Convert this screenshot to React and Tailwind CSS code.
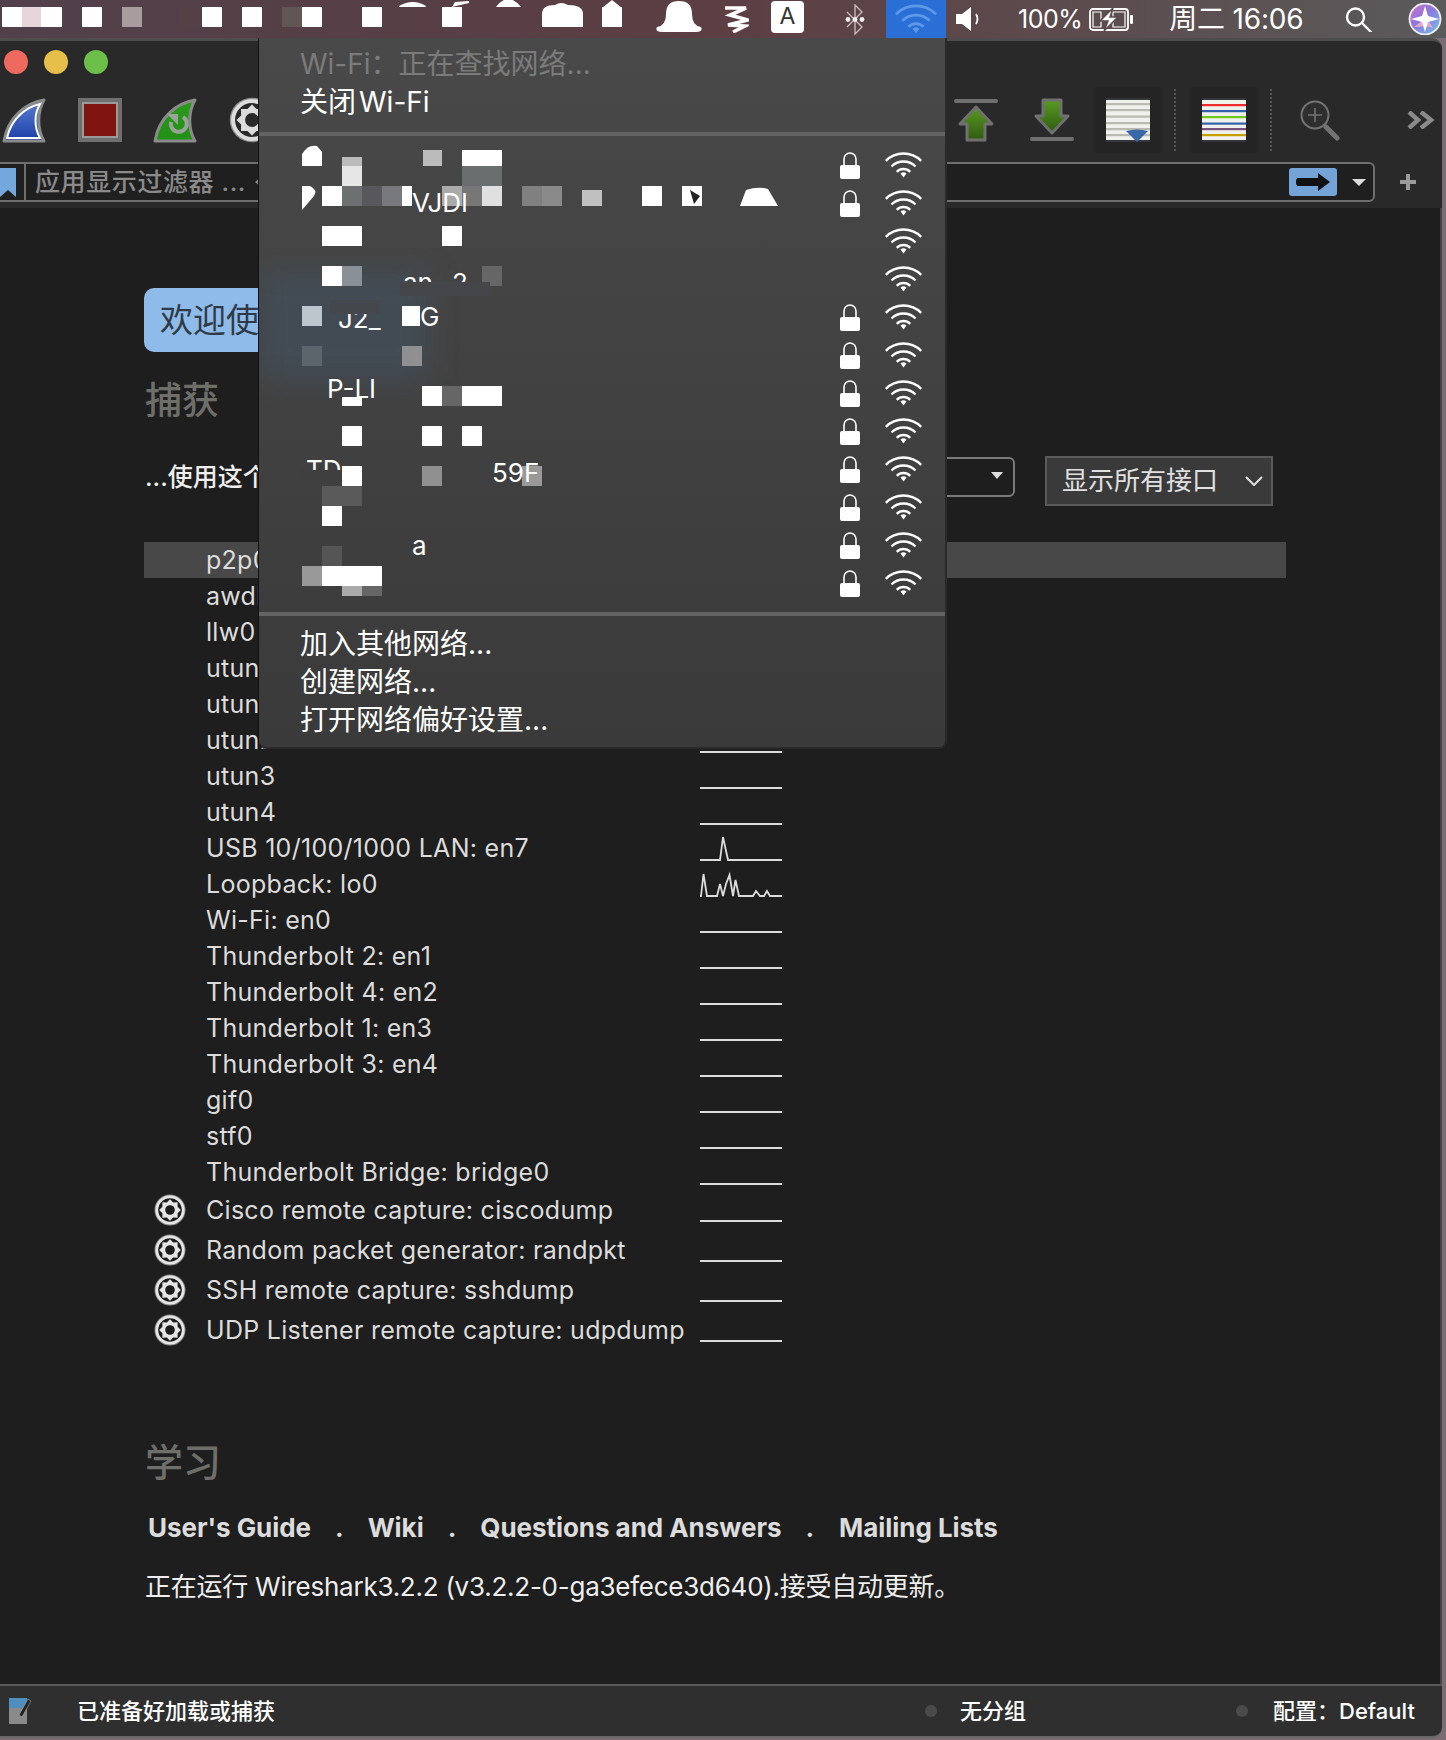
import React from 'react'

const INTERFACES = [
  { name: 'p2p0', active: true },
  { name: 'awdl0' },
  { name: 'llw0' },
  { name: 'utun0' },
  { name: 'utun1' },
  { name: 'utun2' },
  { name: 'utun3' },
  { name: 'utun4' },
  { name: 'USB 10/100/1000 LAN: en7', spark: '0,30 17,30 20,30 23,7 28,30 82,30' },
  { name: 'Loopback: lo0', spark: '0,30 1,30 3.5,8 7,30 17,30 20,18 23,30 26,18 29.5,9 33,30 35.5,14 39,30 53,30 56,25 60,30 64,30 67,25 70,30 82,30' },
  { name: 'Wi-Fi: en0' },
  { name: 'Thunderbolt 2: en1' },
  { name: 'Thunderbolt 4: en2' },
  { name: 'Thunderbolt 1: en3' },
  { name: 'Thunderbolt 3: en4' },
  { name: 'gif0' },
  { name: 'stf0' },
  { name: 'Thunderbolt Bridge: bridge0' },
]

const EXTCAP = [
  'Cisco remote capture: ciscodump',
  'Random packet generator: randpkt',
  'SSH remote capture: sshdump',
  'UDP Listener remote capture: udpdump',
]

// lock flag per wifi row, names are pixelated in the shot
const NETWORKS = [true, true, false, false, true, true, true, true, true, true, true, true]

// [x, y, w, h, fill] in page coordinates
const MENUBAR_BLOCKS = [
  [2, 7, 20, 20, '#fff'], [22, 7, 19, 20, '#e6d6dc'], [41, 7, 21, 20, '#fff'],
  [82, 7, 20, 20, '#fff'], [122, 7, 20, 20, '#a89c9f'], [182, 7, 20, 20, '#554046'],
  [202, 7, 20, 20, '#fff'], [242, 7, 20, 20, '#fff'], [282, 7, 20, 20, '#615654'],
  [302, 7, 20, 20, '#fff'], [362, 7, 20, 20, '#fff'], [442, 7, 20, 20, '#fff'],
  [602, 7, 20, 20, '#fff'],
]

const MOSAIC = [
  [342, 157, 20, 9, '#bbb'], [423, 150, 19, 16, '#bbb'], [462, 150, 40, 16, '#fff'],
  [342, 166, 20, 20, '#e6e6e6'], [462, 166, 40, 20, '#6a6e6e'],
  [322, 186, 20, 20, '#fff'], [342, 186, 20, 20, '#6d7070'], [362, 186, 20, 20, '#58585c'],
  [382, 186, 20, 20, '#78797c'], [402, 186, 10, 20, '#fff'], [442, 186, 20, 20, '#aaa'],
  [462, 186, 20, 20, '#777'], [482, 186, 20, 20, '#e0e0e0'], [522, 186, 20, 20, '#808080'],
  [542, 186, 20, 20, '#8a8a8a'], [582, 190, 20, 16, '#c0c0c0'], [642, 186, 20, 20, '#fff'],
  [682, 186, 20, 20, '#fff'],
  [322, 226, 40, 20, '#fff'], [442, 226, 20, 20, '#fff'],
  [322, 266, 20, 20, '#fff'], [342, 266, 20, 20, '#8a9098'], [482, 266, 20, 20, '#666'],
  [302, 306, 20, 20, '#bcc4cc'], [402, 306, 18, 20, '#fff'],
  [302, 346, 20, 20, '#5c646c'], [402, 346, 20, 20, '#909090'],
  [342, 397, 20, 9, '#fff'], [422, 386, 20, 20, '#fff'], [442, 386, 20, 20, '#666'], [462, 386, 40, 20, '#fff'],
  [342, 426, 20, 20, '#fff'], [422, 426, 20, 20, '#fff'], [462, 426, 20, 20, '#fff'],
  [342, 466, 20, 20, '#fff'], [422, 466, 20, 20, '#909090'], [522, 466, 20, 20, '#999'],
  [322, 486, 40, 20, '#5a5a5a'], [322, 506, 20, 20, '#fff'],
  [322, 546, 20, 20, '#555'],
  [302, 566, 20, 20, '#999'], [322, 566, 60, 20, '#fff'], [342, 586, 20, 10, '#aaa'], [362, 586, 20, 10, '#666'],
]

const MOSAIC_TEXT = [
  ['VJDI', 412, 212],
  ['an', 403, 292],
  ['2', 452, 292],
  ['J2_', 338, 328],
  ['G', 420, 326],
  ['P-LI', 327, 398],
  ['TD', 306, 479],
  ['59F', 492, 482],
  ['a', 412, 555],
]

// bits of menu colour that cut the letters off like the pixelation does
const MOSAIC_COVERS = [
  [400, 282, 90, 14, '#444649'],
  [330, 300, 50, 14, '#44484d'],
  [300, 470, 42, 12, '#3f3f3f'],
]

function arc(r, cx, cy, deg) {
  const a = (deg * Math.PI) / 180
  const dx = r * Math.sin(a)
  const dy = r * Math.cos(a)
  return `M${cx - dx} ${cy - dy}A${r} ${r} 0 0 1 ${cx + dx} ${cy - dy}`
}

function WifiIcon({ className, color = '#fff' }) {
  return (
    <svg viewBox="0 0 37 26" className={className} fill="none" stroke={color} strokeWidth="2.4">
      <path d={arc(25, 18.5, 26.5, 45)} />
      <path d={arc(17, 18.5, 26.5, 45)} />
      <path d={arc(9.5, 18.5, 26.5, 45)} />
      <path d="M15.5 21.5a4.5 4.5 0 0 1 6 0l-3 4z" fill={color} stroke="none" />
    </svg>
  )
}

function LockIcon({ className }) {
  return (
    <svg viewBox="0 0 20 27" className={className}>
      <path d="M4 14V7a6 6 0 0 1 12 0v7" fill="none" stroke="#fff" strokeWidth="1.6" />
      <rect x="0" y="13" width="20" height="14" rx="2" fill="#fff" />
    </svg>
  )
}

function Gear({ className, ring = '#e6e6e6', bg = '#1e1e1e' }) {
  const pts = []
  for (let i = 0; i < 16; i++) {
    const r = i % 2 === 0 ? 10.8 : 8.2
    const a = (i * Math.PI) / 8
    pts.push(`${16 + r * Math.cos(a)},${16 + r * Math.sin(a)}`)
  }
  return (
    <svg viewBox="0 0 32 32" className={className}>
      <circle cx="16" cy="16" r="15.5" fill="#8c8c8c" />
      <circle cx="16" cy="16" r="14.6" fill={ring} />
      <circle cx="16" cy="16" r="11.8" fill={bg} />
      <polygon points={pts.join(' ')} fill={ring} />
      <circle cx="16" cy="16" r="4.8" fill={bg} />
    </svg>
  )
}

function FinIcon({ className, id, top, bottom, inner }) {
  return (
    <svg viewBox="0 0 46 46" className={className}>
      <defs>
        <linearGradient id={id} x1="0" y1="0" x2="0" y2="1">
          <stop offset="0" stopColor={top} />
          <stop offset="1" stopColor={bottom} />
        </linearGradient>
      </defs>
      <path d="M43 3C25 6 7 20 3 44h40C36 32 36 15 43 3z" fill={`url(#${id})`} stroke="#8a8a8a" strokeWidth="3" strokeLinejoin="round" />
      {inner}
    </svg>
  )
}

function ToolArrow({ className, down, id }) {
  return (
    <svg viewBox="0 0 44 44" className={className}>
      <defs>
        <linearGradient id={id} x1="0" y1="0" x2="0" y2="1">
          <stop offset="0" stopColor={down ? '#2f5a10' : '#5a9a22'} />
          <stop offset="1" stopColor={down ? '#5a9a22' : '#2f5a10'} />
        </linearGradient>
      </defs>
      <g transform={down ? 'rotate(180 22 22)' : undefined}>
        <rect x="0" y="1" width="44" height="4" rx="2" fill="#6f6f6f" />
        <path d="M22 9L38 26H31V42H13V26H6z" fill={`url(#${id})`} stroke="#707070" strokeWidth="3" strokeLinejoin="round" />
      </g>
    </svg>
  )
}

function StripeDoc({ className, stripes, marker }) {
  return (
    <svg viewBox="0 0 44 44" className={className}>
      <rect width="44" height="44" fill="#f0f0ec" />
      <rect width="44" height="2" fill="#33373a" />
      <rect y="42" width="44" height="2" fill="#33373a" />
      {stripes.map(([y, c], i) => (
        <rect key={i} y={y} width="44" height="2.2" fill={c} />
      ))}
      {marker && <path d="M20 33Q31 30 42 33L31 44z" fill="#3a68a8" />}
    </svg>
  )
}

function Dotted() {
  return <div className="h-[62px] w-0 border-l-2 border-dotted border-[#555]" />
}

function MenuBar() {
  return (
    <div className="h-[38px] flex items-center bg-gradient-to-r from-[#51404a] via-[#5c3e43] to-[#5a5a5a] text-white">
      <svg viewBox="0 0 722 38" className="w-[722px] h-[38px] shrink-0">
        {MENUBAR_BLOCKS.map(([x, y, w, h, c], i) => (
          <rect key={i} x={x} y={y} width={w} height={h} fill={c} />
        ))}
        <path d="M542 27V14q0-9 13-9 6-4 13 0 15 0 15 9v13z" fill="#fff" />
        <path d="M399 6q14-8 27 0v1h-27zM452 7l3-5 14-1v2l-17 4zM496 7q12-16 25 0zM602 8l10-8 10 8z" fill="#fff" />
        <path d="M657 27q9-1 9-13 0-13 13-13t13 13q0 12 9 13 3 5-6 5h-32q-9 0-6-5z" fill="#fff" />
      </svg>
      <svg viewBox="0 0 26 28" className="w-[26px] h-[28px] ml-[1px] shrink-0" fill="none" stroke="#fff" strokeWidth="3.6">
        <path d="M2 3l21 0-16 7 18 5-20 5 17 1-12 6" />
      </svg>
      <div className="w-[33px] h-[32px] -mt-[5px] ml-[22px] bg-white rounded-[4px] flex items-center justify-center text-[#333] text-[23px] shrink-0">A</div>
      <svg viewBox="0 0 22 31" className="w-[22px] h-[31px] ml-[40px] shrink-0" fill="none" stroke="#c8b8bc" strokeWidth="1.4">
        <path d="M3 8l15 15-7 7V1l7 7L3 23" />
        <circle cx="4" cy="15.5" r="2.4" fill="#eee" stroke="none" />
        <circle cx="11" cy="15.5" r="2.4" fill="#eee" stroke="none" />
        <circle cx="18" cy="15.5" r="2.4" fill="#eee" stroke="none" />
      </svg>
      <div className="w-[60px] h-[38px] ml-[20px] bg-[#2a6fd6] flex items-center justify-center shrink-0">
        <WifiIcon className="w-[42px] h-[30px]" color="#5f9ae8" />
      </div>
      <svg viewBox="0 0 26 24" className="w-[26px] h-[24px] ml-[10px] shrink-0">
        <path d="M0 7h6l9-7v24l-9-7H0z" fill="#fff" />
        <path d="M20 7q3 5 0 10" fill="none" stroke="#fff" strokeWidth="1.8" />
      </svg>
      <span className="ml-[36px] text-[25px] leading-none tracking-[-0.5px] shrink-0">100%</span>
      <svg viewBox="0 0 44 23" className="w-[44px] h-[23px] ml-[7px] shrink-0">
        <rect x="1" y="1" width="38" height="21" rx="3" fill="none" stroke="#fff" strokeWidth="1.8" />
        <rect x="41" y="7" width="3" height="9" rx="1" fill="#fff" />
        <path d="M4 4h8v15H4zM24 4h12v15H24z" fill="none" stroke="#fff" strokeWidth="1.2" />
        <path d="M24 0L11 13h8l-4 10 14-14h-8z" fill="#fff" stroke="#5c4a4c" strokeWidth="1.5" />
      </svg>
      <span className="ml-[36px] text-[28px] leading-none tracking-[-0.2px] shrink-0">周二 16:06</span>
      <svg viewBox="0 0 28 25" className="w-[28px] h-[25px] ml-[42px] shrink-0" fill="none" stroke="#fff" strokeWidth="2.4">
        <circle cx="10.5" cy="10" r="8.5" />
        <path d="M17 16l9 9" strokeLinecap="round" />
      </svg>
      <svg viewBox="0 0 34 32" className="w-[34px] h-[32px] ml-[35px] shrink-0">
        <defs>
          <linearGradient id="siri" x1="0" y1="0" x2="1" y2="1">
            <stop offset="0" stopColor="#d86fc0" />
            <stop offset="0.45" stopColor="#8a78e0" />
            <stop offset="1" stopColor="#6fc8e8" />
          </linearGradient>
        </defs>
        <circle cx="17" cy="16" r="15.5" fill="url(#siri)" stroke="#eee" strokeWidth="1.8" />
        <path d="M6 24q8-6 11-8 5 3 8 9-7-2-8-2-6 1-11 1z" fill="#e8a8c8" />
        <path d="M17 3l3 10 11 3-11 3-3 10-3-10-11-3 11-3z" fill="#fff" />
      </svg>
    </div>
  )
}

function Toolbar() {
  return (
    <div className="bg-[#292929] border-t-[3px] border-[#4d4d4d] rounded-tr-[10px]">
      <div className="flex items-center gap-[16px] pl-[4px] pt-[9px] h-[33px]">
        <div className="w-6 h-6 rounded-full bg-[#ee6a5f]" />
        <div className="w-6 h-6 rounded-full bg-[#e5bf4a]" />
        <div className="w-6 h-6 rounded-full bg-[#6cc04a]" />
      </div>
      <div className="flex items-center h-[66px] mt-[13px]">
        <FinIcon
          id="finblue"
          top="#5a7fd2"
          bottom="#1c3ea8"
          className="w-[46px] h-[46px] ml-[1px]"
          inner={<path d="M39 7C25 10 10 22 6 41h33C33 30 33 17 39 7z" fill="none" stroke="#fff" strokeWidth="2" />}
        />
        <svg viewBox="0 0 44 44" className="w-[44px] h-[44px] ml-[31px]">
          <rect width="44" height="44" fill="#6f6f6f" />
          <rect x="4" y="4" width="36" height="36" fill="#9a9a9a" />
          <rect x="6" y="6" width="32" height="32" fill="#7f1410" />
        </svg>
        <FinIcon
          id="fingreen"
          top="#2a9a1c"
          bottom="#219015"
          className="w-[46px] h-[46px] ml-[30px]"
          inner={
            <g fill="none" stroke="#9aa39a" strokeWidth="4">
              <path d="M19 25a8 8 0 1 0 12-5" />
              <path d="M15 17h11v11z" fill="#9aa39a" stroke="none" />
            </g>
          }
        />
        <Gear className="w-[46px] h-[46px] ml-[31px]" ring="#dcdcdc" bg="#292929" />
        <ToolArrow id="arrowup" className="w-[44px] h-[44px] ml-[679px]" />
        <ToolArrow id="arrowdown" down className="w-[44px] h-[44px] ml-[32px]" />
        <div className="ml-[20px] w-[68px] h-[66px] bg-[#242424] rounded-[4px] flex items-center justify-center">
          <StripeDoc
            className="w-[44px] h-[44px]"
            marker
            stripes={[[5, '#b9bab2'], [11, '#b9bab2'], [17.5, '#b9bab2'], [24, '#b9bab2'], [30, '#b9bab2'], [36, '#b9bab2']]}
          />
        </div>
        <div className="ml-[12px]"><Dotted /></div>
        <div className="ml-[14px] w-[68px] h-[66px] bg-[#242424] rounded-[4px] flex items-center justify-center">
          <StripeDoc
            className="w-[44px] h-[44px]"
            stripes={[[6, '#ee2a2a'], [12, '#2f62a8'], [18, '#6fc81a'], [24.5, '#2f62a8'], [30, '#75507b'], [36, '#c4a000']]}
          />
        </div>
        <div className="ml-[12px]"><Dotted /></div>
        <svg viewBox="0 0 41 41" className="w-[41px] h-[41px] ml-[28px]" fill="none" stroke="#737373">
          <circle cx="15" cy="15" r="13.5" strokeWidth="2" fill="#2e2e2e" />
          <path d="M15 8v14M8 15h14" strokeWidth="1.6" />
          <path d="M26 27l11 11" strokeWidth="5" strokeLinecap="round" />
        </svg>
        <svg viewBox="0 0 28 18" className="w-[28px] h-[18px] ml-[66px]" fill="none" stroke="#8a8a8a" strokeWidth="4.5">
          <path d="M2 1l9 8-9 8" />
          <path d="M14 1l10 8-10 8" />
        </svg>
      </div>
      <div className="flex items-center mt-[9px] pb-[6px]">
        <div className="w-[1375px] h-[40px] bg-[#1f1f1f] border-y-2 border-r-2 border-[#6e6e6e] rounded-r-[6px] flex items-center">
          <svg viewBox="0 0 16 29" className="w-[16px] h-[29px]">
            <path d="M0 0h16v29l-8-7-8 7z" fill="#74a7dc" />
          </svg>
          <div className="w-[2px] h-full ml-[8px] bg-[#6e6e6e]" />
          <span className="ml-[9px] text-[25px] font-medium tracking-[0.6px] text-[#8a8a8a] leading-none">应用显示过滤器 ...</span>
          <div className="ml-[9px] w-0 h-0 border-y-[5px] border-y-transparent border-r-[6px] border-r-[#8a8a8a]" />
          <div className="ml-auto w-[48px] h-[28px] bg-[#74a3d8] rounded-[3px] flex items-center justify-center">
            <svg viewBox="0 0 34 18" className="w-[34px] h-[18px]">
              <path d="M2 5h20V0l12 9-12 9v-5H2q-2 0-2-4t2-4z" fill="#111" />
            </svg>
          </div>
          <div className="ml-[15px] mr-[7px] w-0 h-0 border-x-[7px] border-x-transparent border-t-[7px] border-t-[#ddd]" />
        </div>
        <svg viewBox="0 0 16 16" className="w-[16px] h-[16px] ml-[25px]">
          <path d="M6 0h4v6h6v4h-6v6H6v-6H0V6h6z" fill="#9a9a9a" />
        </svg>
      </div>
    </div>
  )
}

function InterfaceRow({ item, baseline = 30, height = 'h-[36px]', gear }) {
  return (
    <div className={`${height} flex items-center w-[1142px] ${item.active ? 'bg-[#484848]' : ''}`}>
      <div className="w-[62px] shrink-0 pl-[10px]">
        {gear && <Gear className="w-[32px] h-[32px]" />}
      </div>
      <div className="w-[494px] shrink-0 text-[#dcdcdc] text-[25px] leading-none tracking-[0.28px] whitespace-nowrap">{item.name}</div>
      <svg viewBox={`0 0 82 ${gear ? 40 : 36}`} className={`w-[82px] ${gear ? 'h-[40px]' : 'h-[36px]'} shrink-0`} fill="none" stroke="#dcdcdc" strokeWidth="1.8">
        <polyline points={item.spark || `0,${baseline} 82,${baseline}`} />
      </svg>
    </div>
  )
}

function MainContent() {
  return (
    <div className="flex-1 bg-[#1e1e1e] pl-[144px] pt-[80px] border-r-2 border-[#444]">
      <div className="w-[400px] h-[64px] rounded-[10px] bg-[#8ebbe9] flex items-center pl-[16px] text-[33px] text-[#2f3a46] leading-none">欢迎使</div>
      <div className="mt-[29px] ml-[1px] h-[38px] flex items-center text-[37px] font-medium text-[#6f6f6a] leading-none">捕获</div>
      <div className="mt-[37px] h-[50px] flex items-center">
        <div className="w-[401px] shrink-0 ml-[1px] -mt-[7px] text-[25px] text-[#eee] font-medium leading-none whitespace-nowrap">...使用这个</div>
        <div className="w-[469px] h-[40px] -mt-[8px] border-2 border-[#7a7a7a] rounded-[6px] flex items-center justify-end pr-[10px]">
          <div className="w-0 h-0 border-x-[6px] border-x-transparent border-t-[7px] border-t-[#ddd] -mt-[3px]" />
        </div>
        <div className="ml-[30px] w-[228px] h-[50px] bg-[#3a3a3a] border-2 border-[#5a5a5a] flex items-center pl-[15px] text-[26px] text-[#e0e0e0] leading-none -mt-[1px]">
          显示所有接口
          <svg viewBox="0 0 18 10" className="w-[18px] h-[10px] ml-[27px]" fill="none" stroke="#e0e0e0" strokeWidth="2">
            <path d="M1 1l8 8 8-8" />
          </svg>
        </div>
      </div>
      <div className="mt-[36px]">
        {INTERFACES.map((item) => (
          <InterfaceRow key={item.name} item={item} />
        ))}
        {EXTCAP.map((name) => (
          <InterfaceRow key={name} item={{ name }} gear baseline={31} height="h-[40px]" />
        ))}
      </div>
      <div className="mt-[92px] ml-[1px] h-[40px] flex items-center text-[38px] font-medium text-[#6f6f6a] leading-none">学习</div>
      <div className="mt-[29px] ml-[4px] h-[34px] flex items-center text-[26px] font-bold tracking-[-0.05px] text-[#dcdcdc] leading-none whitespace-nowrap">
        <span>User's Guide</span>
        <span className="ml-[24px]">.</span>
        <span className="ml-[24px]">Wiki</span>
        <span className="ml-[24px]">.</span>
        <span className="ml-[24px]">Questions and Answers</span>
        <span className="ml-[24px]">.</span>
        <span className="ml-[25px]">Mailing Lists</span>
      </div>
      <div className="mt-[26px] ml-[1px] h-[32px] flex items-center text-[26px] text-[#eee] tracking-[-0.25px] leading-none whitespace-nowrap">
        正在运行 Wireshark3.2.2 (v3.2.2-0-ga3efece3d640).接受自动更新。
      </div>
    </div>
  )
}

function StatusBar() {
  return (
    <div className="h-[54px] bg-[#2f2f2f] border-t-2 border-[#5a5a5a] border-b-2 border-b-[#666] rounded-br-[10px] flex items-center text-white text-[22px] font-medium leading-none whitespace-nowrap">
      <svg viewBox="0 0 23 26" className="w-[23px] h-[26px] ml-[9px] shrink-0">
        <rect y="0" width="18" height="10" fill="#4f8fc0" />
        <rect y="10" width="18" height="16" fill="#8a8a8a" />
        <path d="M19 1l3 2-9 16-3-2z" fill="#222" stroke="#aaa" strokeWidth="0.6" />
      </svg>
      <span className="ml-[45px]">已准备好加载或捕获</span>
      <div className="w-3 h-3 rounded-full bg-[#4a4a4a] ml-[650px]" />
      <span className="ml-[23px]">无分组</span>
      <div className="w-3 h-3 rounded-full bg-[#4a4a4a] ml-[210px]" />
      <span className="ml-[25px]">配置：Default</span>
    </div>
  )
}

function WifiMenu() {
  return (
    <div className="absolute left-[259px] top-[38px] w-[688px] h-[711px] bg-gradient-to-b from-[#494949] to-[#3b3a3a] border-r-2 border-b-2 border-[#2a2a2a] rounded-b-[8px] shadow-[-1px_0_0_#111] text-[28px] leading-none text-white overflow-hidden">
      <div className="h-[38px] mt-[7px] pl-[41px] flex items-center text-[#7b7b7b]">Wi-Fi：正在查找网络...</div>
      <div className="h-[38px] pl-[41px] flex items-center">关闭<span className="ml-[3px]">Wi-Fi</span></div>
      <div className="h-[4px] mt-[11px] bg-[#636363]" />
      <div className="mt-[10px]">
        {NETWORKS.map((locked, i) => (
          <div key={i} className="h-[38px] flex items-center justify-end pr-[23px] gap-[25px]">
            <LockIcon className={`w-[20px] h-[27px] ${locked ? '' : 'invisible'}`} />
            <WifiIcon className="w-[37px] h-[26px]" />
          </div>
        ))}
      </div>
      <div className="h-[4px] mt-[10px] bg-[#636363]" />
      <div className="mt-[9px]">
        <div className="h-[38px] pl-[41px] flex items-center">加入其他网络...</div>
        <div className="h-[38px] pl-[41px] flex items-center">创建网络...</div>
        <div className="h-[38px] pl-[41px] flex items-center">打开网络偏好设置...</div>
      </div>
      {/* pixelated network names */}
      <svg viewBox="259 38 688 709" className="absolute left-0 top-0 w-[688px] h-[709px] pointer-events-none">
        <defs>
          <filter id="tint" x="-20%" y="-20%" width="140%" height="140%">
            <feGaussianBlur stdDeviation="14" />
          </filter>
        </defs>
        <rect x="259" y="270" width="170" height="110" fill="#42505c" opacity="0.7" filter="url(#tint)" />
        {MOSAIC.map(([x, y, w, h, c], i) => (
          <rect key={i} x={x} y={y} width={w} height={h} fill={c} />
        ))}
        <path d="M302 166v-12q6-10 15-8l5 6v14z" fill="#fff" />
        <path d="M740 206l6-16q12-4 22-1l10 17z" fill="#fff" />
        <path d="M302 186h8q8 4 4 10l-12 14z" fill="#fff" />
        <path d="M690 190l10 6-6 8z" fill="#222" />
        {MOSAIC_TEXT.map(([t, x, y]) => (
          <text key={t} x={x} y={y} fill="#fff" fontSize="26">{t}</text>
        ))}
        {MOSAIC_COVERS.map(([x, y, w, h, c], i) => (
          <rect key={i} x={x} y={y} width={w} height={h} fill={c} />
        ))}
      </svg>
    </div>
  )
}

export default function App() {
  return (
    <div className="relative w-[1446px] h-[1740px] overflow-hidden bg-[#7a6c72] [font-family:Inter,'Noto_Sans_CJK_SC',sans-serif]">
      <MenuBar />
      <div className="w-[1442px] h-[1700px] flex flex-col">
        <Toolbar />
        <MainContent />
        <StatusBar />
      </div>
      <WifiMenu />
    </div>
  )
}
